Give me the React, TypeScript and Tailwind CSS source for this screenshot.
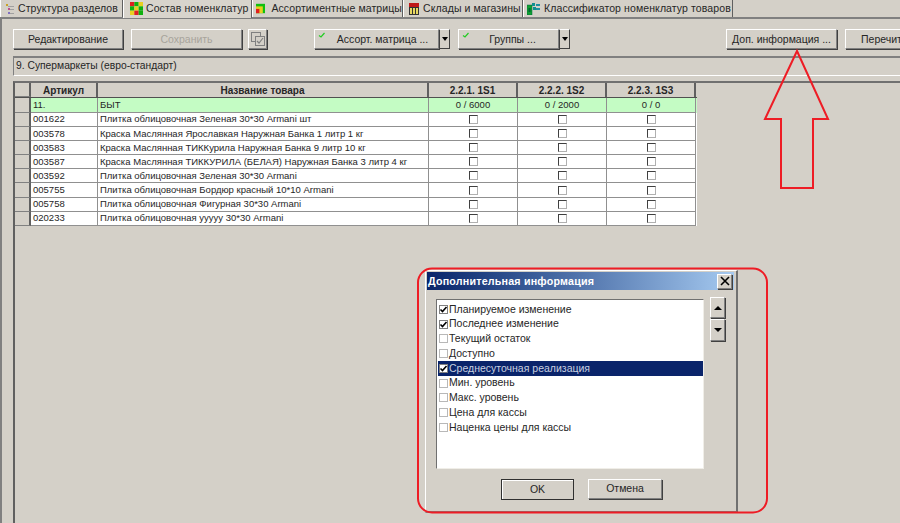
import React from "react";

const raised = "shrink-0 border border-t-white border-l-white border-r-[#808080] border-b-[#808080] shadow-[1px_1px_0_#404040]";

function Check() {
  return (
    <svg width="9" height="7" viewBox="0 0 9 7" className="absolute left-[3px] top-[2px]">
      <path d="M1 3.5 L3 5 L6.5 1" fill="none" stroke="#22cc22" strokeWidth="1.2" />
    </svg>
  );
}

function IconTree() {
  return (
    <svg width="10" height="12" viewBox="0 0 10 12" className="mr-[3px]">
      <rect x="1" y="1" width="2" height="2" fill="#c9a227" />
      <rect x="3" y="3" width="6" height="1" fill="#a0a0a0" />
      <rect x="3" y="5" width="2" height="2" fill="#c0508a" />
      <rect x="5" y="6" width="4" height="1" fill="#a0a0a0" />
      <rect x="3" y="9" width="2" height="2" fill="#8070c0" />
      <rect x="5" y="10" width="4" height="1" fill="#a0a0a0" />
    </svg>
  );
}

function IconChecker() {
  const c = ["#e02020", "#10b010", "#e8d020", "#10b010", "#e8d020", "#10b010", "#e8d020", "#e02020", "#10b010"];
  return (
    <svg width="13" height="13" viewBox="0 0 12 12" className="mr-[3px] -mt-[2px]">
      {c.map((f, i) => (
        <rect key={i} x={(i % 3) * 4} y={Math.floor(i / 3) * 4} width="4" height="4" fill={f} />
      ))}
    </svg>
  );
}

function IconMatrix() {
  return (
    <svg width="11" height="11" viewBox="0 0 11 11" className="mr-[6px]">
      <rect width="11" height="11" fill="#10c010" />
      <rect y="3" width="8" height="8" fill="#e8d020" />
      <rect y="6" width="4" height="5" fill="#e02020" />
    </svg>
  );
}

function IconShop() {
  return (
    <svg width="12" height="12" viewBox="0 0 12 12" className="mr-[3px]">
      <rect x="1" y="0" width="10" height="4" fill="#c01818" />
      <rect x="1" y="4" width="10" height="8" fill="#333" />
      <rect x="2" y="5" width="2" height="6" fill="#e8d860" />
      <rect x="5" y="5" width="2" height="6" fill="#e8d860" />
      <rect x="8" y="5" width="2" height="6" fill="#e8d860" />
    </svg>
  );
}

function IconClassifier() {
  return (
    <svg width="13" height="13" viewBox="0 0 13 13" className="mr-[4px]">
      <rect x="0" y="3" width="5" height="10" fill="#10a030" stroke="#064" strokeWidth="0.5" />
      <rect x="1.5" y="6" width="2" height="4" fill="#063" />
      <rect x="5" y="1" width="3" height="3" fill="#109090" />
      <rect x="6" y="5" width="3" height="3" fill="#109090" />
      <rect x="9" y="2" width="4" height="2" fill="#2090a0" />
      <rect x="9" y="6" width="4" height="2" fill="#2090a0" />
    </svg>
  );
}

const tabs: { label: string; w: string; icon: React.ReactNode; active?: boolean }[] = [
  { label: "Структура разделов", w: "w-[123px] pl-[4px]", icon: <IconTree /> },
  { label: "Состав номенклатур", w: "w-[129px] pl-[6px]", icon: <IconChecker />, active: true },
  { label: "Ассортиментные матрицы", w: "w-[151px] pl-[3px]", icon: <IconMatrix /> },
  { label: "Склады и магазины", w: "w-[120px] pl-[4px]", icon: <IconShop /> },
  { label: "Классификатор номенклатур товаров", w: "w-[210px] pl-[3px]", icon: <IconClassifier /> },
];

function Arrow() {
  return (
    <div className="w-[11px] h-full shrink-0 flex items-center justify-center border-y border-r border-t-white border-r-[#404040] border-b-[#404040] border-l border-l-[#808080]">
      <div className="w-0 h-0 border-x-[3px] border-x-transparent border-t-[4px] border-t-black" />
    </div>
  );
}

const articles: [string, string][] = [
  ["001622", "Плитка облицовочная Зеленая 30*30 Armani шт"],
  ["003578", "Краска Маслянная Ярославкая Наружная Банка 1 литр 1 кг"],
  ["003583", "Краска Маслянная ТИККурила Наружная Банка 9 литр 10 кг"],
  ["003587", "Краска Маслянная ТИККУРИЛА (БЕЛАЯ) Наружная Банка 3 литр 4 кг"],
  ["003592", "Плитка облицовочная Зеленая 30*30 Armani"],
  ["005755", "Плитка облицовочная Бордюр красный 10*10 Armani"],
  ["005758", "Плитка облицовочная Фигурная 30*30 Armani"],
  ["020233", "Плитка облицовочная ууууу 30*30 Armani"],
];

const cols = ["w-[67px]", "w-[331px]", "w-[89px]", "w-[89px]", "w-[89px]"];

function Indicator() {
  return <div className="w-[16px] shrink-0 border-r-2 border-r-[#606060] border-b border-b-[#808080] bg-[#d4d0c8]" />;
}

function Box() {
  return <div className="w-[9px] h-[9px] bg-white border border-t-[#404040] border-l-[#404040] border-r-[#b0b0b0] border-b-[#b0b0b0]" />;
}

function ListBox({ on }: { on: boolean }) {
  return (
    <div className={`w-[9px] h-[9px] ml-[1px] mr-[1px] relative shrink-0 bg-white border ${on ? "border-[#808080]" : "border-[#b8b8b8]"}`}>
      {on && (
        <svg width="9" height="9" viewBox="0 0 9 9" className="absolute -left-[1px] -top-[1px]">
          <path d="M1.5 4.5 L3.5 6.5 L7.5 2" fill="none" stroke="#000" strokeWidth="1.6" />
        </svg>
      )}
    </div>
  );
}

const options: [string, boolean][] = [
  ["Планируемое изменение", true],
  ["Последнее изменение", true],
  ["Текущий остаток", false],
  ["Доступно", false],
  ["Среднесуточная реализация", true],
  ["Мин. уровень", false],
  ["Макс. уровень", false],
  ["Цена для кассы", false],
  ["Наценка цены для кассы", false],
];

export default function App() {
  return (
    <div
      className="w-[900px] h-[523px] relative overflow-hidden bg-[#d4d0c8] text-[10.5px] text-[#262626] flex flex-col"
      style={{ fontFamily: '"Liberation Sans", Arial, sans-serif' }}
    >
      {/* tabs */}
      <div className="h-[17px] flex shrink-0 text-[10.5px] tracking-[0.1px]">
        {tabs.map((t) => (
          <div
            key={t.label}
            className={`${t.w} shrink-0 flex items-center whitespace-nowrap border-r border-r-[#606060] border-l border-l-white ${t.active ? "bg-[#d8d4cc] h-[18px] z-10" : ""}`}
          >
            {t.icon}
            <span>{t.label}</span>
          </div>
        ))}
      </div>

      {/* page frame */}
      <div className="flex-1 flex flex-col border-t-2 border-t-[#808080] border-l-2 border-l-[#808080] min-h-0">
        {/* toolbar */}
        <div className="h-[37px] shrink-0 pl-[11px] pt-[10px] flex items-start whitespace-nowrap">
          <div className={`${raised} w-[110px] h-[20px] pt-[1px] flex items-center justify-center`}>Редактирование</div>
          <div className={`${raised} w-[111px] h-[20px] pt-[1px] ml-[8px] flex items-center justify-center text-[#a8a49c]`}>Сохранить</div>
          <div className={`${raised} w-[19px] h-[20px] ml-[6px] flex items-center justify-center`}>
            <svg width="14" height="14" viewBox="0 0 14 14">
              <rect x="0.5" y="0.5" width="9" height="9" fill="none" stroke="#808080" />
              <rect x="4.5" y="4.5" width="9" height="9" fill="#d4d0c8" stroke="#808080" />
              <path d="M6 9 L8 11 L12 6" fill="none" stroke="#808080" strokeWidth="1.2" />
            </svg>
          </div>
          <div className="ml-[47px] h-[20px] flex shrink-0">
            <div className={`${raised} relative w-[125px] h-[20px] pt-[1px] flex items-center justify-center pl-[12px]`}>
              <Check />
              Ассорт. матрица ...
            </div>
            <Arrow />
          </div>
          <div className="ml-[8px] h-[20px] flex shrink-0">
            <div className={`${raised} relative w-[101px] h-[20px] pt-[1px] flex items-center justify-center pl-[8px]`}>
              <Check />
              Группы ...
            </div>
            <Arrow />
          </div>
          <div className={`${raised} w-[111px] h-[20px] pt-[1px] ml-[156px] flex items-center justify-center`}>Доп. информация ...</div>
          <div className={`${raised} w-[70px] h-[20px] pt-[1px] ml-[8px] flex items-center pl-[15px]`}>Перечитать</div>
        </div>

        {/* info box */}
        <div className="h-[20px] shrink-0 ml-[11px] border-t-2 border-t-[#808080] border-l border-l-[#808080] border-b border-b-white flex items-center pl-[2px] pb-[2px] text-[10.3px]">
          9. Супермаркеты (евро-стандарт)
        </div>

        {/* grid */}
        <div className="flex-1 mt-[5px] ml-[11px] border-t-2 border-t-[#707070] border-l-2 border-l-[#606060] min-h-0 text-[9.5px]">
          <div className="w-[682px]">
            <div className="flex h-[15px] font-bold text-[10px] border-b border-b-[#505050]">
              <Indicator />
              {["Артикул", "Название товара", "2.2.1. 1S1", "2.2.2. 1S2", "2.2.3. 1S3"].map((h, i) => (
                <div key={h} className={`${cols[i]} shrink-0 flex items-center justify-center border-r-2 border-r-[#606060]`}>
                  {h}
                </div>
              ))}
            </div>
            <div className="flex h-[15px] bg-[#c4fcc4]">
              <Indicator />
              <div className={`${cols[0]} shrink-0 pl-[2px] border-r border-b border-[#909090] flex items-center`}>11.</div>
              <div className={`${cols[1]} shrink-0 pl-[2px] border-r border-b border-[#909090] flex items-center`}>БЫТ</div>
              {["0 / 6000", "0 / 2000", "0 / 0"].map((v, i) => (
                <div key={v} className={`${cols[i + 2]} shrink-0 border-r border-b border-[#909090] flex items-center justify-center`}>
                  {v}
                </div>
              ))}
            </div>
            {articles.map(([a, n]) => (
              <div key={a} className="flex h-[14.1px] bg-white">
                <Indicator />
                <div className={`${cols[0]} shrink-0 pl-[2px] border-r border-b border-[#909090] flex items-center`}>{a}</div>
                <div className={`${cols[1]} shrink-0 pl-[2px] border-r border-b border-[#909090] flex items-center whitespace-nowrap`}>{n}</div>
                {[2, 3, 4].map((c) => (
                  <div key={c} className={`${cols[c]} shrink-0 border-r border-b border-[#909090] flex items-center justify-center`}>
                    <Box />
                  </div>
                ))}
              </div>
            ))}
          </div>
        </div>
      </div>

      {/* dialog */}
      <div className="absolute left-[425px] top-[270px] w-[313px] h-[243px] bg-[#d4d0c8] border-r-2 border-r-[#707070] border-b-2 border-b-[#808080] border-l border-l-white border-t border-t-white flex flex-col">
        <div className="h-[18px] mt-[1px] ml-[1px] mr-[2px] shrink-0 bg-linear-to-r from-[#0a246a] to-[#a6caf0] flex items-center justify-between pl-[1px] pr-[2px]">
          <span className="text-white font-bold text-[10.7px] tracking-[0.2px]">Дополнительная информация</span>
          <div className={`${raised} w-[15px] h-[15px] bg-[#d4d0c8] flex items-center justify-center`}>
            <svg width="10" height="10" viewBox="0 0 10 10">
              <path d="M1 1 L9 9 M9 1 L1 9" stroke="#000" strokeWidth="1.6" />
            </svg>
          </div>
        </div>
        <div className="flex pl-[10px] pt-[9px]">
          <div className="w-[268px] h-[170px] bg-white border-t border-l border-t-[#707070] border-l-[#707070] border-r border-b border-r-[#f0eee8] border-b-[#f0eee8] pt-[2px] pl-[1px]">
            {options.map(([o, on], i) => (
              <div key={o} className={`h-[14.75px] flex items-center ${i === 4 ? "bg-[#0a246a]" : ""}`}>
                <ListBox on={on} />
                <span className={i === 4 ? "text-[#c8d0e0]" : ""}>{o}</span>
              </div>
            ))}
          </div>
          <div className="ml-[6px] -mt-[2px] flex flex-col gap-[1px]">
            <div className={`${raised} w-[15px] h-[21px] flex items-center justify-center`}>
              <div className="w-0 h-0 border-x-[4px] border-x-transparent border-b-[4px] border-b-black" />
            </div>
            <div className={`${raised} w-[15px] h-[22px] flex items-center justify-center`}>
              <div className="w-0 h-0 border-x-[4px] border-x-transparent border-t-[4px] border-t-black" />
            </div>
          </div>
        </div>
        <div className="flex pl-[75px] pt-[10px]">
          <div className="w-[73px] h-[21px] border border-[#303030] flex items-center justify-center shadow-[inset_1px_1px_0_white]">OK</div>
          <div className={`${raised} w-[74px] h-[20px] ml-[14px] flex items-center justify-center`}>Отмена</div>
        </div>
      </div>

      {/* red annotations */}
      <svg width="900" height="523" className="absolute left-0 top-0 pointer-events-none">
        <path d="M797 51 L765 119 L781 119 L781 188 L813 188 L813 119 L828 119 Z" fill="none" stroke="#ee1c25" strokeWidth="2" />
        <rect x="418" y="268.5" width="349" height="244" rx="14" fill="none" stroke="#ee1c25" strokeWidth="2" />
      </svg>
    </div>
  );
}
